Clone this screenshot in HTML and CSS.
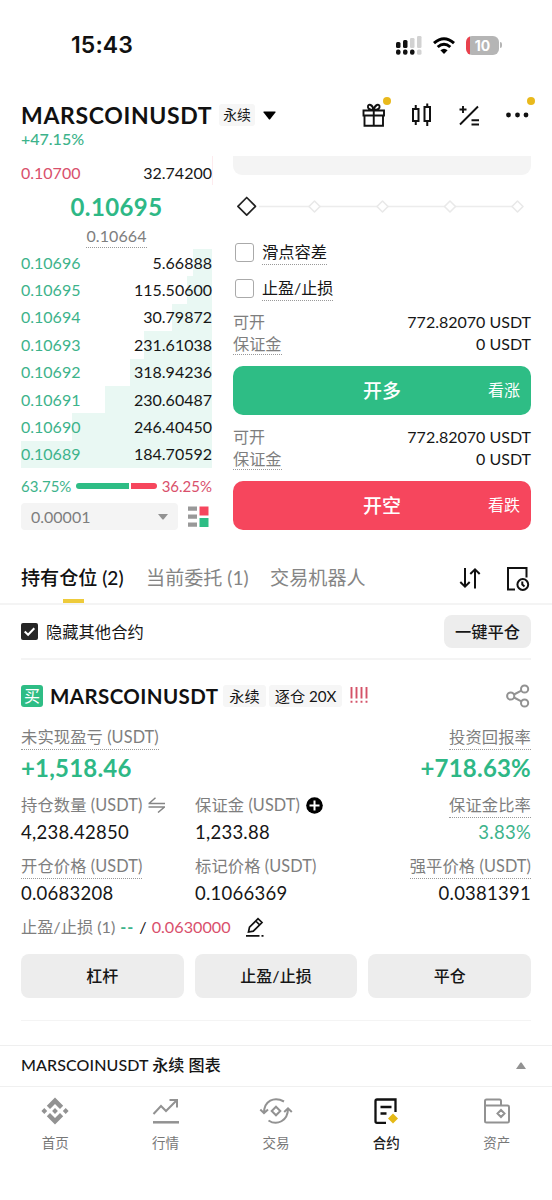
FILE: index.html
```
<!DOCTYPE html>
<html lang="zh-CN">
<head>
<meta charset="utf-8">
<title>MARSCOINUSDT 永续</title>
<link rel="stylesheet" href="styles.css">
</head>
<body>
<div class="status">
  <span class="time">15:43</span>
  <div class="status-icons">
    <svg class="signal" width="28" height="20" viewBox="0 0 28 20"><g fill="#111"><rect x="1" y="7" width="4.500" height="6" rx="1.500"/><rect x="8" y="5" width="4.500" height="8" rx="1.500"/><rect x="1" y="14.500" width="4.500" height="5.200" rx="2"/><rect x="8" y="14.500" width="4.500" height="5.200" rx="2"/><rect x="15" y="14.500" width="4.500" height="5.200" rx="2"/></g><g fill="#d2d2d2"><rect x="15" y="3" width="4.500" height="10" rx="1.300"/><rect x="22" y="1" width="4.500" height="12" rx="1.300"/><rect x="22" y="14.500" width="4.500" height="5.200" rx="1.500"/></g></svg>
    <svg class="wifi" width="22" height="17" viewBox="0 0 22 17"><g fill="none" stroke="#000" stroke-width="3"><path d="M1 6.2Q11-2.6 21 6.2"/><path d="M4.7 10Q11 4.4 17.3 10"/></g><path d="M11 17l-3.6-3.8q3.6-3 7.200 0z"/></svg>
    <div class="battery"><span>10</span></div><i class="battery-tip"></i>
  </div>
</div>

<header class="head">
  <div class="title-row">
    <h1>MARSCOINUSDT</h1><span class="tag tag-sm">永续</span>
    <svg class="caret" width="13" height="9" viewBox="0 0 13 9"><path d="M1 0.500h11q1 0 .4.900L7.300 8q-.8 1-1.600 0L.6 1.400Q0 .5 1 .5z"/></svg>
    <div class="tools">
      <div class="tool"><svg width="24" height="26" viewBox="0 0 24 26" fill="none" stroke="#111" stroke-width="1.900"><path d="M1.500 8.500h20.500v5H1.500zM2.500 13.500v10.200h18.500V13.500M11.750 8.500v15M11.700 8C7 8 5.500 6 6 4s4.500-2 5.700 4C13 2 17 2 17.500 4s-1 4-5.800 4z"/></svg><i class="dot"></i></div>
      <div class="tool"><svg width="24" height="26" viewBox="0 0 24 26" fill="none" stroke="#111" stroke-width="2"><path d="M3 7h5.500v12H3zM5.750 3v4M5.750 19v4M14.500 5H20v14h-5.500zM17.250 1.500V5M17.250 19v5"/></svg></div>
      <div class="tool"><svg width="24" height="26" viewBox="0 0 24 26" fill="none" stroke="#111" stroke-width="1.900"><path d="M2 22.500L20 4.500M1.500 7.500h7M5 4v7M13.500 18.200h7.500M13.500 22.500h7.500"/></svg></div>
      <div class="tool"><svg width="24" height="26" viewBox="0 0 24 26" fill="#111"><circle cx="2.500" cy="13" r="2.400"/><circle cx="11.500" cy="13" r="2.400"/><circle cx="20" cy="13" r="2.400"/></svg><i class="dot"></i></div>
    </div>
  </div>
  <div class="change">+47.15%</div>
</header>

<main>
<section class="trade">
  <div class="book">
    <div class="ask"><i class="depth ask-depth"></i><span class="red">0.10700</span><span>32.74200</span></div>
    <div class="last">0.10695</div>
    <div class="mark"><span class="dotted">0.10664</span></div>
    <div class="bids">
      <div class="bid"><i class="depth" style="width:19px"></i><span class="green">0.10696</span><span>5.66888</span></div>
      <div class="bid"><i class="depth" style="width:25px"></i><span class="green">0.10695</span><span>115.50600</span></div>
      <div class="bid"><i class="depth" style="width:40px"></i><span class="green">0.10694</span><span>30.79872</span></div>
      <div class="bid"><i class="depth" style="width:68px"></i><span class="green">0.10693</span><span>231.61038</span></div>
      <div class="bid"><i class="depth" style="width:82px"></i><span class="green">0.10692</span><span>318.94236</span></div>
      <div class="bid"><i class="depth" style="width:107px"></i><span class="green">0.10691</span><span>230.60487</span></div>
      <div class="bid"><i class="depth" style="width:140px"></i><span class="green">0.10690</span><span>246.40450</span></div>
      <div class="bid"><i class="depth" style="width:191px"></i><span class="green">0.10689</span><span>184.70592</span></div>
    </div>
    <div class="ratio"><span class="green">63.75%</span><div class="ratio-bar"><i class="buy"></i><i class="sell"></i></div><span class="red">36.25%</span></div>
    <div class="precision">
      <div class="select"><span>0.00001</span><svg width="10" height="6" viewBox="0 0 10 6"><path d="M0 0h10L5.500 5.500h-1z" fill="#929292"/></svg></div>
      <svg width="21" height="21" viewBox="0 0 21 21"><g fill="#999"><path d="M0 .5h9v4.300H0zM0 8.500h9v4.300H0zM0 16.500h9v4.300H0z"/></g><path d="M11.500.5h9v9h-9z" fill="#f6465d"/><path d="M11.500 12h9v9h-9z" fill="#2ebd85"/></svg>
    </div>
  </div>

  <div class="form">
    <div class="input-end"></div>
    <div class="slider"><svg width="298" height="24" viewBox="0 0 298 24" fill="#fff"><path d="M26 12.500H284" stroke="#ececec" stroke-width="1.500"/><g stroke="#e9e9e9" stroke-width="1.600" stroke-linejoin="round"><path d="M81.500 7l5.500 5.500-5.500 5.500-5.500-5.500z"/><path d="M149.500 7l5.500 5.500-5.500 5.500-5.500-5.500z"/><path d="M217 7l5.500 5.500-5.500 5.500-5.500-5.500z"/><path d="M284.500 7l5.500 5.500-5.500 5.500-5.500-5.500z"/></g><path d="M13.700 3.500l8.800 8.800-8.800 8.800-8.800-8.800z" stroke="#222" stroke-width="1.700" stroke-linejoin="round"/></svg></div>
    <label class="option"><i class="box"></i><span class="dotted">滑点容差</span></label>
    <label class="option"><i class="box"></i><span class="dotted">止盈/止损</span></label>
    <div class="info"><div><span class="muted">可开</span><span>772.82070 USDT</span></div><div><span class="muted dotted">保证金</span><span>0 USDT</span></div></div>
    <button class="order long"><span>开多</span><small>看涨</small></button>
    <div class="info"><div><span class="muted">可开</span><span>772.82070 USDT</span></div><div><span class="muted dotted">保证金</span><span>0 USDT</span></div></div>
    <button class="order short"><span>开空</span><small>看跌</small></button>
  </div>
</section>

<nav class="tabs">
  <span class="tab active">持有仓位 (2)</span><span class="tab t2">当前委托 (1)</span><span class="tab">交易机器人</span>
  <div class="tab-tools">
    <svg width="22" height="22" viewBox="0 0 22 22" fill="none" stroke="#111" stroke-width="2"><path d="M6 1v18.500M1.300 15L6 19.700l4.700-4.700M16 21.500V2.500M11.300 7L16 2.300 20.700 7"/></svg>
    <svg width="24" height="26" viewBox="0 0 24 26" fill="none" stroke="#111" stroke-width="2"><path d="M9 24.500H2V3h18.500v9.500"/><circle cx="16.800" cy="19.500" r="5.400"/><path d="M16.300 16.500v3l2.200 2"/></svg>
  </div>
</nav>

<div class="filter">
  <svg width="17" height="17" viewBox="0 0 17 17"><rect width="17" height="17" rx="2" fill="#252525"/><path d="M3.700 8.500l3.400 3.300 6.200-6.500" fill="none" stroke="#fff" stroke-width="2"/></svg>
  <span>隐藏其他合约</span><button>一键平仓</button>
</div>

<section class="position">
  <div class="pos-head">
    <span class="side">买</span><h2>MARSCOINUSDT</h2><span class="tag">永续</span><span class="tag">逐仓 20X</span>
    <svg class="risk" width="18" height="17" viewBox="0 0 18 17" stroke="#d45268" stroke-width="1.900"><path d="M1.500 0v11.500M1.500 13.800v2M6.500 0v11.500M6.500 13.800v2M11.500 0v11.500M11.500 13.800v2M16.500 0v11.500M16.500 13.800v2"/></svg>
    <svg class="share" width="24" height="24" viewBox="0 0 24 24" fill="none" stroke="#929292" stroke-width="2"><circle cx="4.700" cy="12" r="3.600"/><circle cx="18.600" cy="5" r="3.600"/><circle cx="18.600" cy="19" r="3.600"/><path d="M8 10.500l7.300-3.800M8 13.500l7.300 3.800"/></svg>
  </div>
  <div class="row pnl">
    <div><p><span class="dotted">未实现盈亏 (USDT)</span></p><b>+1,518.46</b></div>
    <div class="end"><p><span class="dotted">投资回报率</span></p><b>+718.63%</b></div>
  </div>
  <div class="row three">
    <div><p>持仓数量 (USDT) <svg width="18" height="16" viewBox="0 0 18 16" fill="none" stroke="#858585" stroke-width="1.500"><path d="M.5 6.500h16.500M1 6.500L7.500.8M17 10H.5M16.500 10L10 15.500"/></svg></p><strong>4,238.42850</strong></div>
    <div><p>保证金 (USDT) <svg width="17" height="17" viewBox="0 0 17 17"><circle cx="8.500" cy="8.500" r="8.300"/><path d="M8.500 3.500v10M3.500 8.500h10" stroke="#fff" stroke-width="2"/></svg></p><strong>1,233.88</strong></div>
    <div class="end"><p><span class="dotted">保证金比率</span></p><strong class="green">3.83%</strong></div>
  </div>
  <div class="row three">
    <div><p><span class="dotted">开仓价格 (USDT)</span></p><strong>0.0683208</strong></div>
    <div><p>标记价格 (USDT)</p><strong>0.1066369</strong></div>
    <div class="end"><p><span class="dotted">强平价格 (USDT)</span></p><strong>0.0381391</strong></div>
  </div>
  <div class="tpsl"><span class="muted">止盈/止损 (1)</span><span class="green none">--</span><span>/</span><span class="red">0.0630000</span>
    <svg width="20" height="20" viewBox="0 0 20 20" fill="none" stroke="#111" stroke-width="1.700"><path d="M3.500 15l1-4.800L13 1.700l4 3.800-8.700 8.700zM10.700 4l4 3.800M1 18.800h13.500M16.500 18.800h2"/></svg>
  </div>
  <div class="actions"><button>杠杆</button><button>止盈/止损</button><button>平仓</button></div>
</section>
</main>

<footer>
  <div class="chart-bar"><span>MARSCOINUSDT 永续 图表</span><svg width="10" height="7" viewBox="0 0 10 7"><path d="M0 7h10L5.500.5h-1z" fill="#929292"/></svg></div>
  <div class="nav">
    <div><svg width="28" height="28" viewBox="0 0 28 28" fill="#929292"><path d="M14 .5l8.200 8.200-3.200 3.200-5-5-5 5-3.200-3.200zM14 27.500l8.200-8.200-3.200-3.200-5 5-5-5-3.200 3.200zM14 11.100l2.900 2.900-2.900 2.900-2.900-2.900zM3.300 11.100L6.200 14l-2.900 2.900L.4 14zM24.700 11.100l2.900 2.900-2.900 2.900-2.900-2.900z"/></svg><span>首页</span></div>
    <div><svg width="28" height="28" viewBox="0 0 28 28" fill="none" stroke="#929292" stroke-width="2"><path d="M1.500 17l7.500-8 5 5L24.500 3.500M17.500 3h7.500v7.500"/><path d="M1 25.300h26" stroke-width="2.500"/></svg><span>行情</span></div>
    <div><svg width="34" height="28" viewBox="0 0 34 28" fill="none" stroke="#929292" stroke-width="2"><path d="M5 16C5 4 15-1 25 4.500M1.300 12.500L5 16.200l4-3.700M29 11.500C29 24 18 29 9.500 23.500M25.200 15L29 11.300l3.800 3.700M17 9.700l4.300 4.300-4.300 4.300-4.300-4.300z"/></svg><span>交易</span></div>
    <div class="on"><svg width="28" height="28" viewBox="0 0 28 28" fill="none" stroke="#111" stroke-width="2.300"><path d="M14 25.800H5q-1.500 0-1.500-1.500V4q0-1.500 1.500-1.500h18.500V15M8.500 10h11M8.500 16.500h6"/><path d="M21 16.500l5 5-5 5-5-5z" fill="#e5b916" stroke="none"/></svg><span>合约</span></div>
    <div><svg width="28" height="28" viewBox="0 0 28 28" fill="none" stroke="#929292" stroke-width="2"><path d="M2 8.500V4q0-1.500 1.500-1.500h13q1.500 0 1.500 1.500v4.500M2 8.500h22.500q1.500 0 1.500 1.500v14q0 1.500-1.500 1.500h-21Q2 25.500 2 24V8.500M18 13l3.500 3.500L18 20l-3.500-3.500z"/></svg><span>资产</span></div>
  </div>
</footer>
</body>
</html>
```
FILE: styles.css
```
* { box-sizing: border-box; }
body { margin: 0; width: 552px; height: 1200px; overflow: hidden; background: #fff; color: #161616; font: 16px/22px Lato, "Noto Sans CJK SC", sans-serif; }
h1, h2, p { margin: 0; }
i { display: block; }
svg { flex: none; display: block; }
button { border: 0; padding: 0; font: inherit; color: inherit; }
.green { color: #3db38b; }
.red { color: #d9506c; }
.muted { color: #7e7e7e; }
.dotted { position: relative; }
.dotted::after { content: ""; position: absolute; left: 0; right: 0; bottom: -2px; border-bottom: 1px dotted #999; }

.status { height: 90px; padding: 0 50px 0 71px; display: flex; align-items: center; justify-content: space-between; }
.time { font: 600 23px/30px Inter, sans-serif; color: #111; letter-spacing: .1px; }
.status-icons { display: flex; align-items: center; }
.signal { margin-right: 10px; }
.wifi { margin-right: 11px; }
.battery { width: 33px; height: 19px; border-radius: 6px; background: linear-gradient(90deg, #e8414d 4px, #b5b5b5 4px); color: #fff; font: 700 14px/19px Inter, sans-serif; text-align: center; }
.battery-tip { width: 2px; height: 6px; margin-left: 1px; border-radius: 0 2px 2px 0; background: #b5b5b5; }

.head { height: 66px; padding: 10px 21px 0; }
.title-row { height: 30px; display: flex; align-items: center; }
h1 { font-size: 23px; line-height: 30px; font-weight: 700; letter-spacing: .65px; color: #111; }
.tag { padding: 0 6px; background: #f6f6f6; border-radius: 3px; font-size: 15.200px; line-height: 22px; }
.tag-sm { margin-left: 7px; padding: 0 4px; font-size: 13.800px; }
.caret { margin-left: 8px; }
.tools { margin: 0 1px 0 auto; display: flex; gap: 24px; }
.tool { position: relative; }
.dot { position: absolute; top: -5px; right: -5px; width: 8px; height: 8px; border-radius: 50%; background: #e9b91c; }
.change { font-size: 16px; line-height: 17px; font-weight: 500; color: #3db38b; }

.trade { display: flex; gap: 21px; padding: 0 21px; height: 374px; }
.book { width: 191px; display: flex; flex-direction: column; }
.ask, .bid { display: flex; justify-content: space-between; align-items: center; position: relative; }
.ask { height: 34px; }
.last { height: 34px; line-height: 34px; text-align: center; font-size: 24px; font-weight: 700; letter-spacing: .4px; color: #2eb886; }
.mark { height: 25px; text-align: center; line-height: 23px; letter-spacing: .1px; color: #7e7e7e; }
.mark .dotted::after { bottom: -3px; }
.bids { height: 219px; display: grid; grid-template-rows: repeat(8, 1fr); }
.bid span { position: relative; }
.depth { position: absolute; right: 0; top: 0; bottom: 0; background: #e9f8f3; }
.ask-depth { width: 1px; right: -1px; bottom: 5px; background: #fdebee; }
.ratio { height: 35px; display: flex; align-items: center; justify-content: space-between; font-size: 15px; }
.ratio-bar { display: flex; gap: 2px; width: 81px; height: 6px; }
.buy { flex: 53; background: #2ebd85; border-radius: 3px 0 0 3px; }
.sell { flex: 26; background: #f6465d; border-radius: 0 3px 3px 0; }
.precision { display: flex; height: 27px; align-items: center; justify-content: space-between; padding-right: 3px; }
.select { display: flex; align-items: center; justify-content: space-between; width: 157px; height: 27px; padding: 0 10px; border-radius: 4px; background: #f4f4f4; color: #7e7e7e; }

.form { width: 298px; }
.input-end { height: 19px; background: #f4f4f4; border-radius: 0 0 9px 9px; }
.slider { height: 59px; padding-top: 19px; }
.option { height: 36px; display: flex; align-items: center; gap: 8px; padding-left: 2px; font-size: 16.300px; }
.option + .option { font-size: 16px; }
.box { width: 19px; height: 19px; border: 1.500px solid #aaa; border-radius: 3px; }
.option .dotted { line-height: 24px; }
.option .dotted::after { bottom: -1px; }
.info { padding-top: 5px; }
.order + .info { padding-top: 11px; }
.info > div { display: flex; justify-content: space-between; height: 22px; }
.info .dotted { height: 22px; font-size: 16.200px; }
.info .dotted::after { bottom: 0; }
.order { position: relative; display: block; width: 298px; height: 49px; margin-top: 11px; border-radius: 10px; color: #fff; font-size: 19px; font-weight: 500; }
.order small { position: absolute; right: 11px; top: 13px; font-size: 16px; font-weight: 400; }
.long { background: #2ebd85; }
.short { background: #f6465d; }

.tabs { position: relative; margin-top: 20px; height: 55px; padding: 3px 21px 0; display: flex; align-items: center; border-bottom: 2px solid #f4f4f4; font-size: 19.100px; color: #858585; }
.active { color: #111; font-weight: 500; }
.active::after { content: ""; position: absolute; left: 63px; bottom: 0; width: 21px; height: 4px; background: #eecb3b; }
.t2 { margin: 0 21.500px 0 22.500px; }
.tab-tools { margin: 0 1px 0 auto; display: flex; align-items: center; gap: 25px; }

.filter { height: 55px; margin: 0 21px; display: flex; align-items: center; gap: 8px; border-bottom: 2px solid #f4f4f4; font-size: 16.300px; }
.filter button { margin-left: auto; width: 87px; height: 33px; border-radius: 8px; background: #ededed; font-weight: 500; }

.position { margin: 0 21px; height: 361px; border-bottom: 1px solid #f4f4f4; }
.pos-head { height: 71px; display: flex; align-items: center; }
.side { width: 22px; height: 22px; border-radius: 3px; background: #2ebd85; color: #fff; text-align: center; font-size: 16px; }
h2 { margin: 0 5px 0 7px; font-size: 20.500px; font-weight: 700; letter-spacing: .4px; color: #111; }
.pos-head .tag + .tag { margin-left: 3px; }
.risk { margin-left: 8px; }
.share { margin: 0 1px 0 auto; }
.row { display: flex; justify-content: space-between; }
.row p { height: 22px; display: flex; align-items: center; gap: 6px; color: #7e7e7e; font-size: 16.300px; letter-spacing: .1px; }
.row strong { display: block; font-size: 18.500px; font-weight: 400; line-height: 26px; letter-spacing: .25px; margin-top: 3px; }
.three { display: grid; grid-template-columns: 174px 1fr auto; height: 61px; }
.end { text-align: right; }
.end p { justify-content: flex-end; }
.pnl { height: 68px; margin-top: -5px; }
.pnl b { display: block; font-size: 24px; line-height: 30px; letter-spacing: .2px; margin-top: 5px; color: #2eb886; }
.tpsl { height: 22px; display: flex; align-items: center; gap: 5px; font-size: 16.200px; }
.none { letter-spacing: 1px; font-weight: 700; }
.tpsl svg { margin-left: 9px; }
.actions { display: flex; gap: 11px; margin-top: 16px; }
.actions button { flex: 1; height: 44px; border-radius: 8px; background: #ededed; font-weight: 500; }

footer { margin-top: 24px; border-top: 1px solid #efefef; }
.chart-bar { height: 41px; padding: 0 26px 2px 21px; display: flex; align-items: center; justify-content: space-between; border-bottom: 1px solid #f0f0f0; font-weight: 500; letter-spacing: .1px; }
.nav { display: flex; padding-top: 10px; }
.nav > div { width: 110.400px; display: flex; flex-direction: column; align-items: center; color: #777; font-size: 13.500px; line-height: 20px; gap: 8px; }
.nav .on { color: #222; font-weight: 500; }
```
